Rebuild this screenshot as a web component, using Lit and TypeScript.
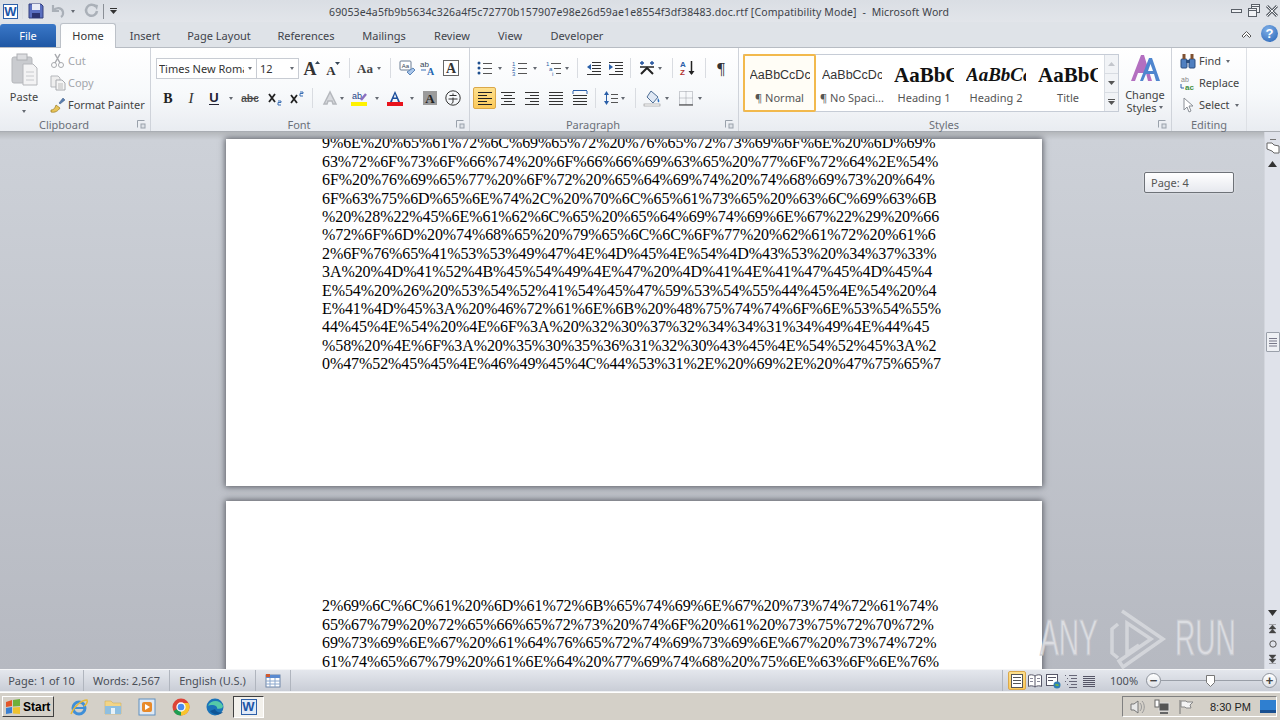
import { LitElement, html, css, svg } from 'lit';
import { customElement } from 'lit/decorators.js';

const s = (body: unknown, w = 16, h = 16) =>
  html`<svg width=${w} height=${h} viewBox="0 0 ${w} ${h}" fill="none">${body}</svg>`;

const lines = (ys: number[], x1: number, x2: number, color = '#333') =>
  ys.map((y) => svg`<path d="M${x1} ${y}.5H${x2}" stroke=${color}/>`);

// ribbon and status bar icons, all drawn on a 16 box unless noted
const icons: Record<string, unknown> = {
  bold: s(svg`<text x="8" y="13" text-anchor="middle" font-family="Liberation Serif" font-weight="700" font-size="14" fill="#222">B</text>`),
  italic: s(svg`<text x="8" y="13" text-anchor="middle" font-family="Liberation Serif" font-style="italic" font-size="15" fill="#333">I</text>`),
  under: s(svg`<text x="8" y="11.5" text-anchor="middle" font-family="Liberation Sans" font-weight="700" font-size="13" fill="#223">U</text><path d="M3 14.5h10" stroke="#223"/>`),
  strike: s(svg`<text x="8" y="12" text-anchor="middle" font-family="Liberation Sans" font-weight="700" font-size="10.5" fill="#555">abc</text><path d="M0 8.5h16" stroke="#444"/>`),
  sub: s(svg`<path d="M3 4l6 8M9 4l-6 8" stroke="#222" stroke-width="1.800"/><path d="M12 11h3v1.500h-3V15h3" stroke="#3a6fb5"/>`),
  sup: s(svg`<path d="M2 5l6 8M8 5l-6 8" stroke="#222" stroke-width="1.800"/><path d="M11 2h3v1.500h-3V6h3" stroke="#3a6fb5"/>`),
  effect: s(svg`<path d="M8 2L2 14h3l1-3h4l1 3h3z" fill="#d8dade" stroke="#b5b8bd" stroke-width="1.5"/>`),
  hilite: s(svg`<text x="1" y="9" font-family="Liberation Sans" font-size="9" fill="#1d3f86">ab</text><path d="M10 10l5-6" stroke="#8a6fc0" stroke-width="2.5"/><rect y="12" width="16" height="4" fill="#fff200"/>`),
  color: s(svg`<path d="M8 1L3 12h2l1-3h4l1 3h2zM6.700 7.500L8 4l1.300 3.500z" fill="#1d4f9c" fill-rule="evenodd"/><rect y="12" width="16" height="4" fill="#e8121c"/>`),
  shadeA: s(svg`<rect x="1" y="1" width="14" height="14" fill="#9b9b9b"/><text x="8" y="13" text-anchor="middle" font-family="Liberation Serif" font-weight="700" font-size="13" fill="#222">A</text>`),
  enclose: s(svg`<circle cx="8" cy="8" r="7.200" stroke="#333"/><path d="M4.500 5.500h7M8 3.500v2M3.500 9h9M8 7.500v5l-1.500 1" stroke="#333"/>`),
  grow: s(svg`<text x="7" y="15" text-anchor="middle" font-family="Liberation Serif" font-weight="700" font-size="18" fill="#333">A</text><path d="M12 4l2.500-3 2.500 3z" fill="#345"/>`),
  shrink: s(svg`<text x="6" y="15" text-anchor="middle" font-family="Liberation Serif" font-weight="700" font-size="13" fill="#333">A</text><path d="M10 2h5l-2.500 3z" fill="#345"/>`),
  case: s(svg`<text x="8" y="13" text-anchor="middle" font-family="Liberation Serif" font-weight="700" font-size="13" fill="#444">Aa</text>`, 17),
  clear: s(svg`<rect x="1" y="1" width="11" height="9" rx="1" fill="#fff" stroke="#6b7c93"/><text x="6.500" y="8" text-anchor="middle" font-family="Liberation Sans" font-size="6" fill="#345">Aa</text><path d="M8 12l6-4 2 2-5 5z" fill="#a9c6ea" stroke="#5d86b8"/>`),
  phonetic: s(svg`<text x="0" y="7" font-family="Liberation Sans" font-size="8" fill="#345">ab</text><path d="M1 10h5" stroke="#3a6fb5"/><text x="7" y="15" font-family="Liberation Serif" font-weight="700" font-size="10" fill="#2566b0">A</text>`),
  boxA: s(svg`<rect x=".5" y=".5" width="15" height="15" fill="#fff" stroke="#666"/><text x="8" y="13" text-anchor="middle" font-family="Liberation Serif" font-weight="700" font-size="14" fill="#333">A</text>`),
  bullets: s(svg`<circle cx="2" cy="3" r="1.500" fill="#1e4f8f"/><circle cx="2" cy="8" r="1.500" fill="#1e4f8f"/><circle cx="2" cy="13" r="1.500" fill="#1e4f8f"/>${lines([3, 8, 13], 6, 15, '#555')}`),
  num: s(svg`<text x="0" y="6" font-family="Liberation Sans" font-size="6" fill="#2a5fa8">1</text><text x="0" y="11" font-family="Liberation Sans" font-size="6" fill="#2a5fa8">2</text><text x="0" y="16" font-family="Liberation Sans" font-size="6" fill="#2a5fa8">3</text>${lines([3, 8, 13], 6, 15, '#555')}`),
  multi: s(svg`<text x="0" y="6" font-family="Liberation Sans" font-size="6" fill="#2a5fa8">1</text><text x="3" y="11" font-family="Liberation Sans" font-size="6" fill="#2a5fa8">a</text><text x="6" y="16" font-family="Liberation Sans" font-size="6" fill="#2a5fa8">i</text><path d="M5 3.500h10M8 8.500h7M10 13.500h5" stroke="#555"/>`),
  outdent: s(svg`<path d="M6 2.500h9M6 5.500h9M6 8.500h9M6 11.500h9M1 14.500h14" stroke="#333"/><path d="M1 7l4-3v6z" fill="#2a5fa8"/>`),
  indent: s(svg`<path d="M1 2.500h14M7 5.500h8M7 8.500h8M7 11.500h8M1 14.500h14" stroke="#333"/><path d="M5 7L1 4v6z" fill="#2a5fa8"/>`),
  asian: s(svg`<path d="M2 14L8 8l6 6" stroke="#222" stroke-width="2"/><path d="M1 7h14" stroke="#222" stroke-width="1.500"/><path d="M3 1v4M1 3h4M13 1v4M11 3h4" stroke="#1e4f9c" stroke-width="1.300"/>`),
  sort: s(svg`<text x="0" y="7" font-family="Liberation Sans" font-weight="700" font-size="8" fill="#2a5fa8">A</text><text x="0" y="15" font-family="Liberation Sans" font-weight="700" font-size="8" fill="#b03030">Z</text><path d="M11.500 1v13" stroke="#222" stroke-width="1.500"/><path d="M8.500 11l3 4 3-4z" fill="#222"/>`),
  pil: s(svg`<text x="8" y="14" text-anchor="middle" font-family="Liberation Serif" font-size="17" fill="#333">¶</text>`),
  left: s(svg`<path d="M1 2.500h14M1 5.500h9M1 8.500h14M1 11.500h9M1 14.500h14" stroke="#222"/>`),
  center: s(svg`<path d="M1 2.500h14M4 5.500h8M1 8.500h14M4 11.500h8M1 14.500h14" stroke="#333"/>`),
  right: s(svg`<path d="M1 2.500h14M6 5.500h9M1 8.500h14M6 11.500h9M1 14.500h14" stroke="#333"/>`),
  just: s(svg`${lines([2, 5, 8, 11, 14], 1, 15)}`),
  dist: s(svg`<path d="M1 .5h14M1 1v3M15 1v3" stroke="#2a5fa8"/>${lines([5, 8, 11, 14], 1, 15)}`),
  spacing: s(svg`<path d="M3.500 1L1 5h5zM3.500 15L1 11h5z" fill="#2a5fa8"/><path d="M3.500 4v8" stroke="#2a5fa8"/>${lines([4, 8, 12], 8, 15, '#555')}`),
  bucket: s(svg`<path d="M7 1l7 6-5 6-6-6z" fill="#dfe8f4" stroke="#4f6f96"/><path d="M14 8c1 2 2 3 1 4s-2-1-1-4z" fill="#2a6fc0"/><rect y="14" width="16" height="2" fill="#fff" stroke="#777" stroke-width=".5"/>`, 18),
  borders: s(svg`<path d="M1.500 1.500h13v13h-13zM8 1.500v13M1.500 8h13" stroke="#9a9ea6" stroke-dasharray="1 1"/><path d="M1 15h14" stroke="#333"/>`),
};

const launcher = s(svg`<path d="M.5 7.500v-7h7" stroke="#99a1ab"/><rect x="4" y="4" width="4" height="4" fill="#dde1e7" stroke="#99a1ab"/>`, 9, 9);
const arrow = html`<span class="arr"></span>`;

type Item = [string, number, boolean?];

const fontRow: Item[] = [
  ['', 143], ['grow', 24], ['shrink', 20], ['sep', 12], ['case', 20], ['arr', 7], ['sep', 16],
  ['clear', 18], ['phonetic', 23], ['', 3], ['boxA', 18],
];
const fontRow2: Item[] = [
  ['bold', 23], ['italic', 23], ['under', 23], ['arr', 12], ['strike', 25], ['sub', 23], ['sup', 23],
  ['sep', 8], ['', 5], ['effect', 18], ['arr', 6], ['hilite', 28], ['arr', 8], ['color', 28], ['arr', 6],
  ['shadeA', 30], ['enclose', 16],
];
const paraRow: Item[] = [
  ['', 5], ['bullets', 14], ['arr', 16], ['', 4], ['num', 15], ['arr', 16], ['', 2], ['multi', 18], ['arr', 8],
  ['sep', 12], ['', 3], ['outdent', 16], ['', 6], ['indent', 15], ['sep', 14], ['', 1], ['asian', 17], ['arr', 10],
  ['sep', 14], ['', 1], ['sort', 15], ['sep', 20], ['pil', 11],
];
const paraRow2: Item[] = [
  ['left', 23, true], ['center', 24], ['right', 24], ['just', 24], ['dist', 23], ['sep', 8], ['', 4],
  ['spacing', 15], ['arr', 10], ['sep', 15], ['bucket', 19], ['arr', 10], ['', 6], ['borders', 15], ['arr', 14],
];

const tabs: [string, number][] = [
  ['Home', 56], ['Insert', 58], ['Page Layout', 90], ['References', 84], ['Mailings', 72],
  ['Review', 64], ['View', 52], ['Developer', 82],
];

const pageOne = [
  '9%6E%20%65%61%72%6C%69%65%72%20%76%65%72%73%69%6F%6E%20%6D%69%',
  '63%72%6F%73%6F%66%74%20%6F%66%66%69%63%65%20%77%6F%72%64%2E%54%',
  '6F%20%76%69%65%77%20%6F%72%20%65%64%69%74%20%74%68%69%73%20%64%',
  '6F%63%75%6D%65%6E%74%2C%20%70%6C%65%61%73%65%20%63%6C%69%63%6B',
  '%20%28%22%45%6E%61%62%6C%65%20%65%64%69%74%69%6E%67%22%29%20%66',
  '%72%6F%6D%20%74%68%65%20%79%65%6C%6C%6F%77%20%62%61%72%20%61%6',
  '2%6F%76%65%41%53%53%49%47%4E%4D%45%4E%54%4D%43%53%20%34%37%33%',
  '3A%20%4D%41%52%4B%45%54%49%4E%47%20%4D%41%4E%41%47%45%4D%45%4',
  'E%54%20%26%20%53%54%52%41%54%45%47%59%53%54%55%44%45%4E%54%20%4',
  'E%41%4D%45%3A%20%46%72%61%6E%6B%20%48%75%74%74%6F%6E%53%54%55%',
  '44%45%4E%54%20%4E%6F%3A%20%32%30%37%32%34%34%31%34%49%4E%44%45',
  '%58%20%4E%6F%3A%20%35%30%35%36%31%32%30%43%45%4E%54%52%45%3A%2',
  '0%47%52%45%45%4E%46%49%45%4C%44%53%31%2E%20%69%2E%20%47%75%65%7',
];
const pageTwo = [
  '2%69%6C%6C%61%20%6D%61%72%6B%65%74%69%6E%67%20%73%74%72%61%74%',
  '65%67%79%20%72%65%66%65%72%73%20%74%6F%20%61%20%73%75%72%70%72%',
  '69%73%69%6E%67%20%61%64%76%65%72%74%69%73%69%6E%67%20%73%74%72%',
  '61%74%65%67%79%20%61%6E%64%20%77%69%74%68%20%75%6E%63%6F%6E%76%',
];

const viewIcons = [
  s(svg`<rect x="2.500" y="1.500" width="11" height="13" fill="#fff" stroke="#555"/><path d="M4 4.500h8M4 7.500h8M4 10.500h8" stroke="#555"/>`),
  s(svg`<path d="M8 3C6 1.500 3 1.500 1.500 2.500v11C3 12.500 6 12.500 8 14c2-1.500 5-1.500 6.500-.5v-11C13 1.500 10 1.500 8 3zM8 3v11" stroke="#556" fill="#fff"/><path d="M3 5.500h3M3 8.500h3M10 5.500h3M10 8.500h3" stroke="#889"/>`),
  s(svg`<rect x="1.500" y="1.500" width="11" height="11" fill="#fff" stroke="#556"/><path d="M3 4.500h8M3 7.500h5" stroke="#556"/><circle cx="12" cy="12" r="3.500" fill="#2f7fb5"/><path d="M10 11h3l1 2h-3z" fill="#6ab04c"/>`),
  s(svg`<path d="M6 2.500h8M8 5.500h6M6 8.500h8M8 11.500h6M6 14.500h8" stroke="#667"/><path d="M2 2.500h1M2 8.500h1M4 5.500h1M4 11.500h1" stroke="#667"/>`),
  s(svg`${lines([3, 5, 7, 9, 11, 13], 2, 14, '#556')}`),
];

@customElement('app-root')
export class AppRoot extends LitElement {
  static styles = css`
    :host {
      display: flex;
      flex-direction: column;
      width: 1280px;
      height: 720px;
      overflow: hidden;
      font: 11px/14px 'Noto Sans', sans-serif;
      color: #444;
      background: #dfe3e8;
    }
    svg { display: block; overflow: visible; }

    .title {
      height: 22px;
      display: flex;
      align-items: center;
      background: linear-gradient(#dadee4, #e2e5ea);
      position: relative;
    }
    .qat { display: flex; align-items: center; width: 329px; padding-left: 3px; box-sizing: border-box; }
    .word-icon {
      width: 13px;
      height: 13px;
      border: 1px solid #2c5fa8;
      background: #fff;
      color: #1d56a8;
      font: 700 13px/13px 'Liberation Sans', sans-serif;
      text-align: center;
    }
    .caption { flex: 1; color: #3d4249; white-space: pre; font-size: 10.500px; letter-spacing: 0.130px; padding-top: 2px; }
    .winbtns { display: flex; gap: 4px; padding-right: 1px; }

    .tabs {
      height: 25px;
      display: flex;
      align-items: flex-end;
      background: #dfe3e8;
    }
    .file {
      width: 56px;
      height: 23px;
      margin-right: 4px;
      background: linear-gradient(#3a78c8, #1f57a4);
      color: #fff;
      border-radius: 3px 3px 0 0;
      text-align: center;
      line-height: 23px;
    }
    .tab { height: 23px; line-height: 23px; text-align: center; color: #3f444b; box-sizing: border-box; }
    .tab.on {
      background: linear-gradient(#fbfcfd, #fff);
      border: 1px solid #bcc1c8;
      border-bottom: 0;
      border-radius: 3px 3px 0 0;
      height: 25px;
      line-height: 24px;
      margin-bottom: -1px;
      position: relative;
      color: #333;
    }
    .tabs-right { margin-left: auto; display: flex; align-items: center; gap: 9px; padding: 0 2px 2px 0; height: 23px; }
    .help {
      width: 17px;
      height: 17px;
      border-radius: 50%;
      background: radial-gradient(circle at 40% 30%, #7fb0e8, #2662b5);
      color: #fff;
      font: 700 13px/17px 'Liberation Sans', sans-serif;
      text-align: center;
    }

    .ribbon {
      height: 86px;
      display: flex;
      box-sizing: border-box;
      border-top: 1px solid #b7bcc3;
      border-bottom: 1px solid #a9adb3;
      background: linear-gradient(#fff 0, #f7f9fb 55%, #e9ecf1 100%);
    }
    .group {
      box-sizing: border-box;
      border-right: 1px solid #cfd3da;
      display: flex;
      flex-direction: column;
      position: relative;
    }
    .group.last { border-right: 1px solid #dde0e5; }
    .glabel {
      margin-top: auto;
      height: 14px;
      line-height: 15px;
      text-align: center;
      color: #6b7079;
      position: relative;
    }
    .glabel.launched { padding-right: 22px; }
    .launch { position: absolute; right: 4px; top: 3px; }
    .body { flex: 1; }

    .clip { display: flex; padding-top: 2px; }
    .paste { width: 48px; display: flex; flex-direction: column; align-items: center; padding-top: 3px; }
    .paste span { margin-top: 4px; }
    .arr {
      display: block;
      width: 0;
      height: 0;
      border: 2.500px solid transparent;
      border-top: 3px solid #656a72;
      border-bottom: 0;
    }
    .paste .arr { margin-top: 6px; }
    .small { display: flex; flex-direction: column; padding-left: 2px; letter-spacing: -0.050px; }
    .small div { display: flex; align-items: center; height: 22px; gap: 2px; white-space: nowrap; }
    .small .off { color: #a3a6ab; }
    .small .arr { margin-left: 2px; }

    .rows { display: flex; flex-direction: column; gap: 8px; padding-top: 9px; }
    .row { display: flex; height: 22px; align-items: center; position: relative; }
    .cell { display: flex; align-items: center; justify-content: center; height: 22px; flex: none; box-sizing: border-box; }
    .cell.on { background: linear-gradient(#fde08e, #fbc95a); border: 1px solid #dba84a; border-radius: 2px; }
    .sepline { width: 1px; height: 20px; background: #d9dce1; }
    .sepline.short { height: 15px; }
    .sepline.dark { background: #8a8f96; }
    .combos { position: absolute; left: 0; top: 1px; display: flex; }
    .combo {
      box-sizing: border-box;
      height: 21px;
      border: 1px solid #c8ccd3;
      background: #fff;
      display: flex;
      align-items: center;
      justify-content: space-between;
      padding: 0 4px 0 2px;
      color: #333;
      white-space: nowrap;
      overflow: hidden;
    }
    .combo.name { width: 101px; }
    .combo.size { width: 42px; border-left: 0; padding-left: 3px; }
    .combo-name { width: 85px; overflow: hidden; }

    .styles { display: flex; padding: 6px 0 0 4px; }
    .gallery {
      width: 376px;
      height: 58px;
      box-sizing: border-box;
      border: 1px solid #c6ccd6;
      background: #fff;
      display: flex;
    }
    .sty {
      width: 72px;
      flex: none;
      display: flex;
      flex-direction: column;
      align-items: center;
      box-sizing: border-box;
      color: #555;
    }
    .sty.on { border: 2px solid #f2b94d; border-radius: 2px; background: #fffdf6; margin: -1px 0 -1px -1px; height: 58px; width: 73px; }
    .prev {
      height: 34px;
      width: 60px;
      box-sizing: border-box;
      padding-top: 2px;
      overflow: hidden;
      white-space: nowrap;
      color: #111;
      display: flex;
      align-items: center;
      margin-top: 2px;
    }
    .sty.on .prev { margin-top: 1px; }
    .p1 { font: 12.500px 'Liberation Sans', sans-serif; color: #333; }
    .p2 { font: 700 21px 'Liberation Serif', serif; }
    .p3 { font: italic 700 19px 'Liberation Serif', serif; }
    .gscroll { margin-left: auto; width: 14px; display: flex; flex-direction: column; border-left: 1px solid #d8dce2; }
    .gscroll div { flex: 1; display: flex; align-items: center; justify-content: center; border-bottom: 1px solid #d8dce2; background: #f1f3f6; }
    .gscroll div:last-child { border-bottom: 0; }
    .change { width: 52px; display: flex; flex-direction: column; align-items: center; text-align: center; line-height: 13px; }
    .change svg { margin-bottom: 6px; }
    .change .inline { display: flex; align-items: center; gap: 3px; }
    .edit { padding: 2px 0 0 8px; }
    .edit .small { padding-left: 0; letter-spacing: 0; }
    .edit .small div { gap: 3px; }

    .work { height: 537px; display: flex; position: relative; }
    .canvas {
      flex: 1;
      overflow: hidden;
      box-sizing: border-box;
      padding: 7px 0 0 226px;
      background: linear-gradient(#b4b7bb 0, #cdd1d8 8px, #b6b9c1 100%);
    }
    .page {
      width: 816px;
      height: 347px;
      background: #fff;
      box-shadow: 0 0 6px 1px #5c5f66;
      box-sizing: border-box;
      padding: 0 0 0 96px;
      overflow: hidden;
      color: #000;
      font: 16px/18.400px 'Liberation Serif', serif;
      letter-spacing: -0.080px;
    }
    .page.next { margin-top: 15px; height: 400px; padding-top: 96px; }
    .page pre { margin: 0; font: inherit; }
    .page .cut { margin-top: -5px; }
    .scroll {
      width: 16px;
      background: #dfe2ea;
      display: flex;
      flex-direction: column;
      align-items: center;
      border-left: 1px solid #d3d6dd;
      box-sizing: border-box;
      padding: 7px 0 1px;
    }
    .scroll .up { margin-top: 5px; }
    .scroll .thumb {
      width: 14px;
      height: 20px;
      margin-top: 165px;
      border: 1px solid #9aa0aa;
      box-sizing: border-box;
      background: #eef0f4;
      display: flex;
      align-items: center;
      justify-content: center;
      border-radius: 1px;
    }
    .scroll .spring { flex: 1; }
    .scroll .end { height: 16px; display: flex; align-items: center; justify-content: center; }
    .scroll .down { height: 14px; display: flex; align-items: center; justify-content: center; }
    .tip {
      position: absolute;
      left: 1144px;
      top: 40px;
      width: 90px;
      height: 21px;
      box-sizing: border-box;
      border: 1px solid #6e7278;
      border-radius: 2px;
      background: linear-gradient(#fff, #e6e8ee);
      padding-left: 6px;
      line-height: 19px;
      color: #555;
      box-shadow: 0 0 3px rgba(255, 255, 255, 0.5);
    }
    .mark {
      position: absolute;
      left: 1040px;
      top: 475px;
      display: flex;
      align-items: center;
      gap: 11px;
      color: rgba(226, 227, 231, 0.9);
      font: 400 36px/60px 'Liberation Sans', sans-serif;
      -webkit-text-stroke: 1px rgba(196, 198, 204, 0.8);
    }
    .mark span { display: block; transform: scaleY(1.380) scaleX(0.780); transform-origin: left center; width: 57px; }
    .mark svg { margin-left: 2px; }
    .mark path { stroke: rgba(214, 216, 221, 0.9); stroke-width: 3.500px; }

    .status {
      height: 23px;
      display: flex;
      align-items: center;
      background: linear-gradient(#e4e7ed, #c9cdd6);
      border-top: 1px solid #f4f5f7;
      box-sizing: border-box;
      border-bottom: 1px solid #eef0f3;
      color: #4a4f57;
    }
    .part { height: 100%; display: flex; align-items: center; justify-content: center; border-right: 1px solid #b0b5be; box-sizing: border-box; }
    .part.w1 { width: 84px; }
    .part.w2 { width: 86px; }
    .part.w3 { width: 86px; }
    .part.w4 { width: 35px; }
    .views { margin-left: auto; display: flex; align-items: center; height: 100%; border-left: 1px solid #b0b5be; padding-left: 5px; }
    .view { width: 18px; height: 19px; display: flex; align-items: center; justify-content: center; }
    .view.on { background: linear-gradient(#fde08e, #fbc95a); border: 1px solid #dba84a; box-sizing: border-box; border-radius: 2px; }
    .zoomval { width: 34px; margin-left: 12px; }
    .slider { width: 131px; display: flex; align-items: center; margin: 0 3px 0 2px; }
    .circle {
      width: 15px;
      height: 15px;
      flex: none;
      box-sizing: border-box;
      border-radius: 50%;
      border: 1px solid #8d929b;
      background: linear-gradient(#fff, #dfe2e8);
      display: flex;
      align-items: center;
      justify-content: center;
      font: 700 13px/13px 'Liberation Sans', sans-serif;
      color: #444;
    }
    .track { flex: 1; height: 1px; background: #9a9fa8; position: relative; }
    .knob { position: absolute; left: 44px; top: -6px; }

    .taskbar {
      height: 28px;
      background: #d4d0c8;
      border-top: 1px solid #fff;
      box-sizing: border-box;
      display: flex;
      align-items: center;
      padding: 0 3px 0 2px;
    }
    .start {
      width: 52px;
      height: 21px;
      box-sizing: border-box;
      border: 1px solid;
      border-color: #fff #404040 #404040 #fff;
      display: flex;
      align-items: center;
      gap: 2px;
      padding-left: 2px;
      color: #000;
      font: 700 12px 'Liberation Sans', sans-serif;
    }
    .launchers { display: flex; margin-left: 8px; }
    .launchers div { width: 34px; display: flex; justify-content: center; align-items: center; }
    .wordtask {
      margin-left: 1px;
      width: 31px;
      height: 22px;
      box-sizing: border-box;
      border: 1px solid;
      border-color: #404040 #fff #fff #404040;
      background: #f3f1ec;
      display: flex;
      align-items: center;
      justify-content: center;
    }
    .wordtask .word-icon { width: 14px; height: 14px; background: #dfe9f7; }
    .tray {
      margin-left: auto;
      width: 155px;
      height: 21px;
      box-sizing: border-box;
      border: 1px solid;
      border-color: #808080 #fff #fff #808080;
      display: flex;
      align-items: center;
      padding-left: 7px;
      gap: 8px;
      color: #222;
      font: 11px 'Liberation Sans', sans-serif;
    }
    .clock { margin-left: 8px; width: 42px; white-space: nowrap; }
  `;

  private cells(items: Item[]) {
    return items.map(([name, w, on]) => {
      let inner: unknown = icons[name];
      if (name === 'arr') inner = arrow;
      if (name === 'sep') inner = html`<span class="sepline"></span>`;
      return html`<div class="cell ${on ? 'on' : ''}" style="width:${w}px">${inner}</div>`;
    });
  }

  private label(text: string, launch = true) {
    return html`<div class="glabel ${launch ? 'launched' : ''}">${text}${launch ? html`<span class="launch">${launcher}</span>` : ''}</div>`;
  }

  private titlebar() {
    const qat: Item[] = [['sep', 9], ['', 18], ['', 25], ['arr', 5], ['', 8], ['', 16], ['sep', 9], ['', 11]];
    const glyphs = [
      html`<span class="sepline short"></span>`,
      s(svg`<path d="M1 1h12l2 2v12H1z" fill="#5a6fc0" stroke="#35407f"/><rect x="4" y="1" width="8" height="6" fill="#e8ecf6"/><rect x="4" y="10" width="8" height="5" fill="#2c3470"/>`),
      s(svg`<path d="M3 2v6h6M3.500 7.500C6 4 12 4 13 9c.3 2-.5 4-2 5" stroke="#aab0b8" stroke-width="2.200"/>`),
      arrow,
      '',
      s(svg`<path d="M12.500 3.500A5.500 5.500 0 1 0 14 8" stroke="#aab0b8" stroke-width="2.500"/><path d="M10 1l5 1-1 5z" fill="#aab0b8"/>`),
      html`<span class="sepline short dark"></span>`,
      s(svg`<path d="M0 1.500h7" stroke="#333"/><path d="M0 3h7L3.500 7z" fill="#333"/>`, 7, 8),
    ];
    return html`<div class="title">
      <div class="qat">
        <div class="word-icon">W</div>
        ${qat.map(([, w], i) => html`<div class="cell" style="width:${w}px">${glyphs[i]}</div>`)}
      </div>
      <div class="caption">69053e4a5fb9b5634c326a4f5c72770b157907e98e26d59ae1e8554f3df38483.doc.rtf [Compatibility Mode]  -  Microsoft Word</div>
      <div class="winbtns">
        ${s(svg`<rect x="1.500" y="6.500" width="10" height="3" fill="#f0f2f5" stroke="#5a6068"/>`, 13, 16)}
        ${s(svg`<rect x="4.500" y="1.500" width="8" height="8" fill="#f0f2f5" stroke="#5a6068"/><rect x="1.500" y="5.500" width="8" height="8" fill="#f0f2f5" stroke="#5a6068"/><path d="M2 7.500h7M5 3.500h7" stroke="#5a6068"/>`, 14, 16)}
        ${s(svg`<path d="M2 3l10 10M12 3L2 13" stroke="#5a6068" stroke-width="3"/><path d="M2 3l10 10M12 3L2 13" stroke="#f0f2f5"/>`, 14, 16)}
      </div>
    </div>`;
  }

  private tabstrip() {
    return html`<div class="tabs">
      <div class="file">File</div>
      ${tabs.map(([t, w], i) => html`<div class="tab ${i === 0 ? 'on' : ''}" style="width:${w}px">${t}</div>`)}
      <div class="tabs-right">
        ${s(svg`<path d="M1 7l4.500-4.500L10 7 8.500 8.500l-3-3-3 3z" fill="#fff" stroke="#555"/>`, 11, 10)}
        <div class="help">?</div>
      </div>
    </div>`;
  }

  private clipboard() {
    return html`<div class="group" style="width:151px">
      <div class="body clip">
        <div class="paste">
          ${s(svg`<rect x="1" y="4" width="20" height="26" rx="2" fill="#c9cbcf" stroke="#b5b7bb"/><rect x="6" y="1" width="10" height="6" fill="#dcdde0" stroke="#aeb0b4"/><path d="M12 11h10l4 4v17H12z" fill="#f3f3f4" stroke="#b5b7bb"/><path d="M15 19h8M15 23h8M15 27h8" stroke="#c8cacd"/>`, 27, 33)}
          <span>Paste</span>
          ${arrow}
        </div>
        <div class="small">
          <div class="off">${s(svg`<circle cx="4" cy="12" r="2.500" stroke="#a8aaae"/><circle cx="11" cy="12" r="2.500" stroke="#a8aaae"/><path d="M5 10l5-9M10 10L5 1" stroke="#a8aaae" stroke-width="1.500"/>`)}Cut</div>
          <div class="off">${s(svg`<path d="M1 1h7l2 2v9H1z" fill="#eee" stroke="#b5b7bb"/><path d="M6 5h6l3 3v7H6z" fill="#f5f5f5" stroke="#a8aaae"/><path d="M8 9h5M8 11h5M8 13h5" stroke="#bbb"/>`)}Copy</div>
          <div>${s(svg`<path d="M9 6l4-5 2 2-5 4z" fill="#5a7fb0" stroke="#39567f" stroke-width=".5"/><path d="M1 13c3 0 4-2 5-5l4 3c-2 3-5 5-9 4z" fill="#e8c458" stroke="#9a7a20" stroke-width=".7"/>`)}Format Painter</div>
        </div>
      </div>
      ${this.label('Clipboard')}
    </div>`;
  }

  private font() {
    return html`<div class="group" style="width:319px">
      <div class="body rows" style="padding-left:5px">
        <div class="row">
          ${this.cells(fontRow)}
          <div class="combos">
            <div class="combo name"><span class="combo-name">Times New Roman</span>${arrow}</div>
            <div class="combo size"><span>12</span>${arrow}</div>
          </div>
        </div>
        <div class="row">${this.cells(fontRow2)}</div>
      </div>
      ${this.label('Font')}
    </div>`;
  }

  private paragraph() {
    return html`<div class="group" style="width:269px">
      <div class="body rows" style="padding-left:3px">
        <div class="row">${this.cells(paraRow)}</div>
        <div class="row">${this.cells(paraRow2)}</div>
      </div>
      ${this.label('Paragraph')}
    </div>`;
  }

  private styleGroup() {
    const items = [
      ['AaBbCcDc', '¶ Normal', 'p1'],
      ['AaBbCcDc', '¶ No Spaci...', 'p1'],
      ['AaBbC', 'Heading 1', 'p2'],
      ['AaBbCc', 'Heading 2', 'p3'],
      ['AaBbC', 'Title', 'p2'],
    ];
    return html`<div class="group" style="width:433px">
      <div class="body styles">
        <div class="gallery">
          ${items.map(([p, n, c], i) => html`<div class="sty ${i === 0 ? 'on' : ''}"><div class="prev ${c}">${p}</div><div>${n}</div></div>`)}
          <div class="gscroll">
            <div>${s(svg`<path d="M0 4l3.500-4L7 4z" fill="#c3c6cc"/>`, 7, 4)}</div>
            <div>${s(svg`<path d="M0 0l3.500 4L7 0z" fill="#555"/>`, 7, 4)}</div>
            <div>${s(svg`<path d="M0 .5h7" stroke="#555"/><path d="M0 2l3.500 4L7 2z" fill="#555"/>`, 7, 6)}</div>
          </div>
        </div>
        <div class="change">
          ${s(svg`<path d="M2 27L12 1h3l8 26h-4l-2-8H9l-3 8z" fill="#b36fc0" fill-rule="evenodd"/><path d="M11 27L20 4h3l8 23h-4l-2-7h-8l-3 7z" fill="#4f86cf"/><path d="M19 17l2.500-7 2.500 7z" fill="#fff"/>`, 32, 28)}
          <span>Change</span>
          <span class="inline">Styles ${arrow}</span>
        </div>
      </div>
      ${this.label('Styles')}
    </div>`;
  }

  private editing() {
    return html`<div class="group last" style="width:75px">
      <div class="body edit">
        <div class="small">
          <div>${s(svg`<rect x="1" y="6" width="6" height="9" rx="1" fill="#4f7fc0" stroke="#2c4f80"/><rect x="9" y="6" width="6" height="9" rx="1" fill="#4f7fc0" stroke="#2c4f80"/><rect x="6" y="7" width="4" height="3" fill="#2c4f80"/><rect x="2.500" y="1" width="3" height="5" fill="#7f5030"/><rect x="10.500" y="1" width="3" height="5" fill="#7f5030"/>`)}Find ${arrow}</div>
          <div>${s(svg`<text x="1" y="7" font-family="Liberation Sans" font-size="7" fill="#888">ab</text><text x="5" y="15" font-family="Liberation Sans" font-weight="700" font-size="8" fill="#3f8f3f">ac</text><path d="M1 9v4h3" stroke="#2a5fa8"/>`)}Replace</div>
          <div>${s(svg`<path d="M4 1v12l3-3 2 5 2-1-2-5h4z" fill="#fff" stroke="#8a8f96"/>`)}Select ${arrow}</div>
        </div>
      </div>
      ${this.label('Editing', false)}
    </div>`;
  }

  private scrollbar() {
    return html`<div class="scroll">
      ${s(svg`<path d="M5 .5h6" stroke="#777"/><path d="M2 4h5l2 2 5 1v7H9L7 12 2 10z" fill="#fff" stroke="#666"/>`, 15, 17)}
      <div class="up">${s(svg`<path d="M0 6l4.500-6L9 6z" fill="#333"/>`, 9, 6)}</div>
      <div class="thumb">${s(svg`<path d="M0 .5h8M0 3h8M0 5.500h8M0 8h8" stroke="#778"/>`, 8, 9)}</div>
      <div class="spring"></div>
      <div class="down">${s(svg`<path d="M0 0l4.500 6L9 0z" fill="#333"/>`, 9, 6)}</div>
      <div class="end">${s(svg`<path d="M0 1.500h7M3.500 2L0 6h7zM3.500 6L0 10h7z" stroke="#444" stroke-width=".4" fill="#444"/>`, 7, 10)}</div>
      <div class="end">${s(svg`<circle cx="4" cy="4" r="3.200" stroke="#555"/>`, 8, 8)}</div>
      <div class="end">${s(svg`<path d="M0 8.500h7M3.500 8L0 4h7zM3.500 4L0 0h7z" stroke="#444" stroke-width=".4" fill="#444"/>`, 7, 10)}</div>
    </div>`;
  }

  private statusbar() {
    return html`<div class="status">
      <div class="part w1">Page: 1 of 10</div>
      <div class="part w2">Words: 2,567</div>
      <div class="part w3">English (U.S.)</div>
      <div class="part w4">${s(svg`<rect x="1" y="2" width="14" height="12" fill="#fff" stroke="#6f86a8"/><rect x="1" y="2" width="14" height="3" fill="#5a8ad0"/><path d="M1 8h14M1 11h14M5 5v9M10 5v9" stroke="#8aa6cc"/><rect x="1" y="1" width="4" height="3" fill="#d05a30"/>`)}</div>
      <div class="views">
        ${viewIcons.map((v, i) => html`<div class="view ${i === 0 ? 'on' : ''}">${v}</div>`)}
        <div class="zoomval">100%</div>
        <div class="slider">
          <div class="circle">−</div>
          <div class="track"><span class="knob">${s(svg`<path d="M1.500 1.500h8v7l-4 4-4-4z" fill="#fff" stroke="#777"/>`, 11, 13)}</span></div>
          <div class="circle">+</div>
        </div>
      </div>
    </div>`;
  }

  private taskbar() {
    return html`<div class="taskbar">
      <div class="start">
        ${s(svg`<path d="M1 3l6-2v6L1 8z" fill="#e2562a"/><path d="M8 1l7-1v7l-7 .5z" fill="#6fb03a"/><path d="M1 9l6-1v6l-6 1z" fill="#3a7fd0"/><path d="M8 8.500l7-.5v7l-7-.5z" fill="#eec22e"/>`)}
        Start
      </div>
      <div class="launchers">
        <div>${s(svg`<circle cx="9" cy="10" r="6" stroke="#3f8fd8" stroke-width="3"/><path d="M4 10h10" stroke="#3f8fd8" stroke-width="2"/><path d="M1 16C4 8 12 2 17 2c1 2-1 5-3 6" stroke="#e6b93a" stroke-width="1.500"/>`, 18, 18)}</div>
        <div>${s(svg`<path d="M1 3h6l2 2h8v11H1z" fill="#f2d487" stroke="#c9a850" stroke-width=".5"/><path d="M1 8h16v8H1z" fill="#8fbfe0"/><rect x="7" y="10" width="4" height="6" fill="#e8f2f8"/>`, 18, 18)}</div>
        <div>${s(svg`<rect x="1" y="1" width="16" height="16" fill="#dfe9f4" stroke="#5f8fc0"/><rect x="4" y="4" width="10" height="10" rx="2" fill="#e88a2a"/><path d="M7 6l5 3-5 3z" fill="#fff"/>`, 18, 18)}</div>
        <div>${s(svg`<circle cx="9" cy="9" r="8.500" fill="#dd4437"/><path d="M9 9L1.500 13A8.500 8.500 0 0 0 9 17.500z" fill="#1e9e52"/><path d="M9 5h7.500A8.500 8.500 0 0 1 9 17.500z" fill="#f9c42d"/><circle cx="9" cy="9" r="4" fill="#4a8cf0" stroke="#fff" stroke-width="1.300"/>`, 18, 18)}</div>
        <div>${s(svg`<circle cx="9" cy="9" r="8.500" fill="#1b73b8"/><path d="M2 8C4 2 14 1 17 8c0 3-4 3-6 2.500C12 7 5 6 2 8z" fill="#55c9a8"/><path d="M4 13c3 4 9 5 13 1-4 1-7 0-8-3z" fill="#0f5596"/>`, 18, 18)}</div>
      </div>
      <div class="wordtask"><div class="word-icon">W</div></div>
      <div class="tray">
        ${s(svg`<path d="M1 5h3l4-3v12L4 11H1z" fill="#e8e8e8" stroke="#777"/><path d="M10 4c2 2 2 6 0 8M12 2c3 3 3 9 0 12" stroke="#999"/>`)}
        ${s(svg`<rect x="5" y="4" width="10" height="8" fill="#555" stroke="#ddd"/><rect x="1" y="1" width="4" height="7" fill="#fff" stroke="#666"/><path d="M6 14h8" stroke="#666" stroke-width="2"/>`)}
        ${s(svg`<path d="M2 1v14" stroke="#777"/><path d="M3 2h5l1 1h6l-3 3 1 3H8L7 8H3z" fill="#f4f4f4" stroke="#888"/>`)}
        <span class="clock">8:30 PM</span>
        ${s(svg`<rect x="1" y="1" width="16" height="13" fill="#2f7fd0"/><rect x="1" y="11" width="16" height="3" fill="#184f90"/>`, 18, 16)}
      </div>
    </div>`;
  }

  render() {
    return html`
      ${this.titlebar()}
      ${this.tabstrip()}
      <div class="ribbon">
        ${this.clipboard()}
        ${this.font()}
        ${this.paragraph()}
        ${this.styleGroup()}
        ${this.editing()}
      </div>
      <div class="work">
        <div class="canvas">
          <div class="page">
            <div class="cut">${pageOne.map((l) => html`<pre>${l}</pre>`)}</div>
          </div>
          <div class="page next">${pageTwo.map((l) => html`<pre>${l}</pre>`)}</div>
        </div>
        ${this.scrollbar()}
        <div class="tip">Page: 4</div>
        <div class="mark">
          <span>ANY</span>
          ${s(svg`<path d="M8 17l-6 5v24l6 5"/><path d="M12 4l41 28-40 28-4-6 32-22-24-16v30l12-8"/>`, 54, 62)}
          <span>RUN</span>
        </div>
      </div>
      ${this.statusbar()}
      ${this.taskbar()}
    `;
  }
}
